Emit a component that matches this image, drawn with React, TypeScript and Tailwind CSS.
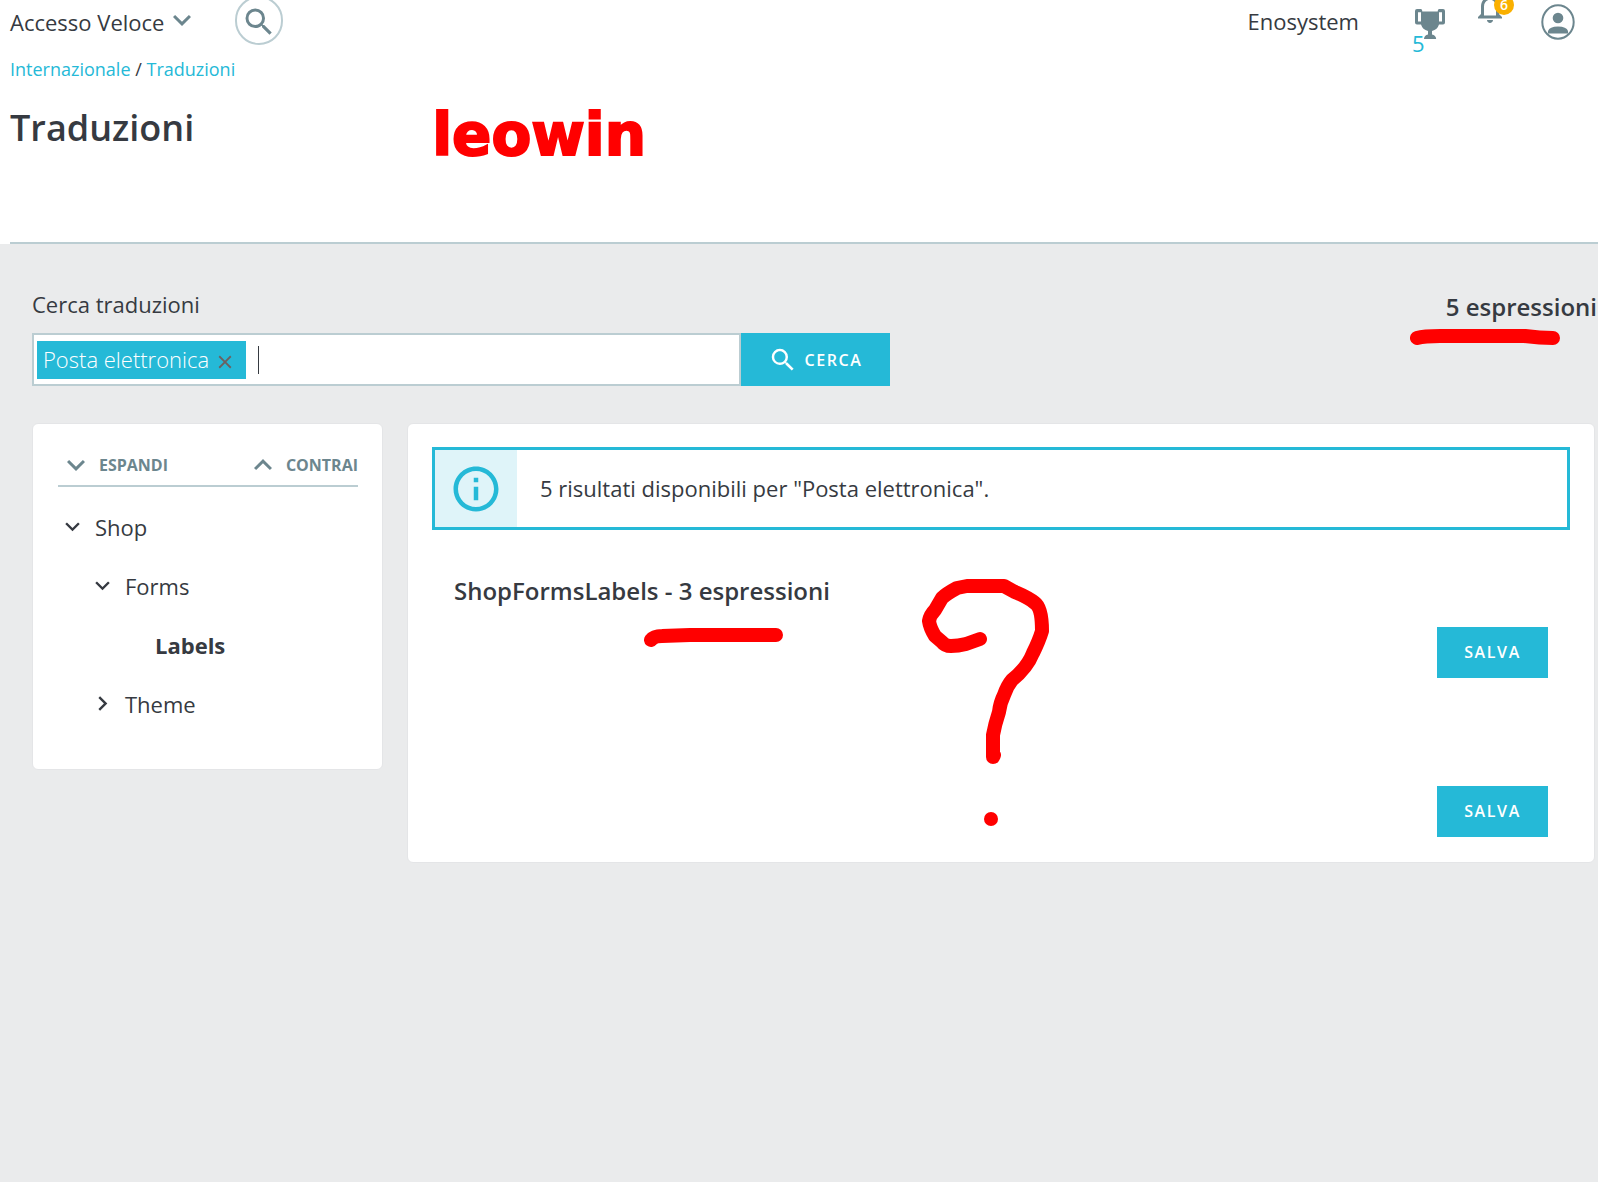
import React from "react";
import {
  MdSearch,
  MdExpandMore,
  MdExpandLess,
  MdChevronRight,
  MdNotificationsNone,
  MdInfoOutline,
  MdClose,
} from "react-icons/md";

function Trophy() {
  return (
    <svg viewBox="0 0 30 30" className="h-[30px] w-[30px]" fill="currentColor" aria-hidden="true">
      <path
        fillRule="evenodd"
        d="M0 2Q0 0 2 0H6Q7.300 0 7.300 2.500H22.700Q22.700 0 24 0H28Q30 0 30 2V13.500Q30 15.300 28 15.500H24Q22.500 20.500 17 22V25.500Q20.800 26 21.200 30H9Q9.300 26 13 25.500V22Q7.500 20.500 6 15.500H2Q0 15.300 0 13.500ZM3 3.200V12.500H6V3.200ZM24 3.200V12.500H27V3.200Z"
      />
    </svg>
  );
}

function Avatar() {
  return (
    <svg viewBox="0 0 34 36" className="h-9 w-[34px]" aria-hidden="true">
      <ellipse cx="17" cy="18" rx="15.700" ry="16.700" fill="none" stroke="currentColor" strokeWidth="2" />
      <circle cx="17" cy="14" r="5.300" fill="currentColor" />
      <path d="M7 29.500V27Q8.500 22.500 17 22.500T27 27V29.500Z" fill="currentColor" />
    </svg>
  );
}

function TopBar() {
  return (
    <div className="flex h-[45px] items-start justify-between pr-[23px]">
      <div className="flex items-start">
        <button type="button" className="flex h-[44px] items-center">
          Accesso Veloce
          <MdExpandMore className="-mt-1 h-9 w-9 text-[#6c868e]" />
        </button>
        <button
          type="button"
          aria-label="Cerca"
          className="-mt-1 ml-[35px] flex h-[49px] w-12 items-center justify-center rounded-full border-2 border-[#bbcdd2] text-[#6c868e]"
        >
          <MdSearch className="mt-0.5 h-9 w-9 shrink-0" />
        </button>
      </div>
      <div className="flex items-start text-[#6c868e]">
        <a href="#shop" className="mr-[56px] leading-[42px] text-[#363a41]">
          Enosystem
        </a>
        <a href="#premi" className="relative mt-[9px] mr-[27px]">
          <Trophy />
          <span className="absolute top-[18px] left-[-3px] leading-8 text-[#25b9d7]">5</span>
        </a>
        <button type="button" aria-label="Notifiche" className="relative mt-[-10px] mr-[33px]">
          <MdNotificationsNone className="h-9 w-9" />
          <span className="absolute top-[5px] left-[22px] flex h-5 w-5 items-center justify-center rounded-full bg-[#fab000] text-sm leading-4 font-semibold text-white">
            6
          </span>
        </button>
        <button type="button" aria-label="Profilo" className="mt-1">
          <Avatar />
        </button>
      </div>
    </div>
  );
}

const tree = [
  { label: "Shop", indent: "pl-0", icon: "open" },
  { label: "Forms", indent: "pl-[30px]", icon: "open" },
  { label: "Labels", indent: "pl-[60px]", icon: "none" },
  { label: "Theme", indent: "pl-[30px]", icon: "closed" },
];

function Sidebar() {
  return (
    <aside className="w-[351px] shrink-0 rounded-md border border-[#e4e5e7] bg-white pt-[22px] pr-6 pb-9 pl-[25px]">
      <div className="flex h-[41px] items-center justify-between border-b-2 border-[#bbcdd2] pb-0.5 text-base font-bold text-[#6c868e]">
        <button type="button" className="flex items-center gap-[5px]">
          <MdExpandMore className="h-9 w-9" />
          ESPANDI
        </button>
        <button type="button" className="flex items-center gap-[5px]">
          <MdExpandLess className="h-9 w-9" />
          CONTRAI
        </button>
      </div>
      <ul className="pt-2.5">
        {tree.map((n) => (
          <li key={n.label} className={n.indent}>
            <button type="button" className={"flex h-[59px] items-center gap-2 " + (n.icon === "none" ? "font-bold" : "")}>
              <span className="flex w-[29px] justify-center">
                {n.icon === "open" && <MdExpandMore className="h-[29px] w-[29px]" />}
                {n.icon === "closed" && <MdChevronRight className="h-[29px] w-[29px]" />}
              </span>
              {n.label}
            </button>
          </li>
        ))}
      </ul>
    </aside>
  );
}

function SaveButton() {
  return (
    <button
      type="button"
      className="h-[51px] w-[111px] bg-[#25b9d7] pb-0.5 text-base font-semibold tracking-widest text-white"
    >
      SALVA
    </button>
  );
}

function Results() {
  return (
    <section className="relative min-w-0 flex-1 rounded-md border border-[#e4e5e7] bg-white px-6 pt-[23px] pb-[25px]">
      <div className="flex h-[83px] border-[3px] border-[#25b9d7]">
        <div className="flex w-[82px] items-center justify-center bg-[#dff4f9]">
          <MdInfoOutline className="h-[54px] w-[54px] text-[#25b9d7]" />
        </div>
        <p className="flex items-center pb-0.5 pl-[23px]">5 risultati disponibili per "Posta elettronica".</p>
      </div>
      <h2 className="mt-[45px] pl-[22px] text-2xl leading-8 font-semibold">ShopFormsLabels - 3 espressioni</h2>
      <div className="mt-5 flex flex-col items-end gap-[108px] pr-[22px]">
        <SaveButton />
        <SaveButton />
      </div>
      {/* Red pen marks over the results */}
      <svg
        viewBox="0 0 420 260"
        className="pointer-events-none absolute top-[147px] left-[233px] h-[260px] w-[420px]"
        fill="none"
        stroke="#ff0000"
        strokeWidth="14"
        strokeLinecap="round"
        strokeLinejoin="round"
        aria-hidden="true"
      >
        <path d="M10 69Q13 65 21 65L49 64H135" />
        <path d="M339 68L325 73Q317 75 310 75Q304 75 301 71L294 65Q289 57 288 50Q289 44 294 39L301 27Q305 23 316 17L326 15H363L374 21Q388 27 394 32Q401 37 401 60Q398 70 392 82Q386 97 371 109Q366 115 363 124Q359 132 358 141Q354 153 352 164V186L353 184" />
        <path d="M350 248h0" />
      </svg>
    </section>
  );
}

export default function App() {
  return (
    <div className="min-h-screen overflow-x-hidden bg-[#eaebec] font-['Open_Sans',sans-serif] text-[22px] leading-8 text-[#363a41]">
      <header className="bg-white pl-2.5">
        <TopBar />
        <nav aria-label="Percorso" className="pt-2.5 text-lg leading-7">
          <a href="#internazionale" className="text-[#25b9d7]">
            Internazionale
          </a>{" "}
          /{" "}
          <a href="#traduzioni" className="text-[#25b9d7]">
            Traduzioni
          </a>
        </nav>
        <div className="flex h-[161px] items-start gap-[238px] border-b-2 border-[#bbcdd2] pt-5">
          <h1 className="text-4xl leading-[50px] font-semibold">Traduzioni</h1>
          <span className="font-['DejaVu_Sans',sans-serif] text-[58px] leading-[64px] font-bold text-[#ff0000] [-webkit-text-stroke:2px_#ff0000]">
            leowin
          </span>
        </div>
      </header>

      <main className="pt-11 pl-8">
        <div className="flex items-start justify-between pr-px">
          <form onSubmit={(e) => e.preventDefault()}>
            <label htmlFor="q" className="block leading-8">
              Cerca traduzioni
            </label>
            <div className="mt-[13px] flex h-[53px]">
              <div className="flex w-[709px] items-center border-2 border-[#bbcdd2] bg-white pl-[3px]">
                <span className="flex h-[38px] w-[209px] items-center justify-between bg-[#25b9d7] pr-2.5 pb-0.5 pl-1.5 font-light text-white">
                  Posta elettronica
                  <button type="button" aria-label="Rimuovi" className="mt-1.5 text-[#6c6060]">
                    <MdClose className="h-[22px] w-[22px]" />
                  </button>
                </span>
                <span className="ml-3 h-7 w-px bg-[#363a41]" aria-hidden="true" />
                <input id="q" type="text" className="min-w-0 flex-1 bg-transparent outline-none" />
              </div>
              <button
                type="submit"
                className="flex w-[149px] items-center justify-center gap-1.5 bg-[#25b9d7] text-base font-semibold tracking-widest text-white"
              >
                <MdSearch className="h-[30px] w-[30px]" />
                CERCA
              </button>
            </div>
          </form>
          <div className="relative mt-[3px] text-2xl leading-8 font-semibold">
            5 espressioni
            <svg
              viewBox="0 0 150 18"
              className="pointer-events-none absolute top-[38px] right-[37px] h-[18px] w-[150px]"
              fill="none"
              stroke="#ff0000"
              strokeWidth="14"
              strokeLinecap="round"
              strokeLinejoin="round"
              aria-hidden="true"
            >
              <path d="M7 9Q14 7 30 7H115Q130 9 143 9" />
            </svg>
          </div>
        </div>

        <div className="mt-[37px] flex items-start gap-6 pr-[3px]">
          <Sidebar />
          <Results />
        </div>
      </main>
    </div>
  );
}
